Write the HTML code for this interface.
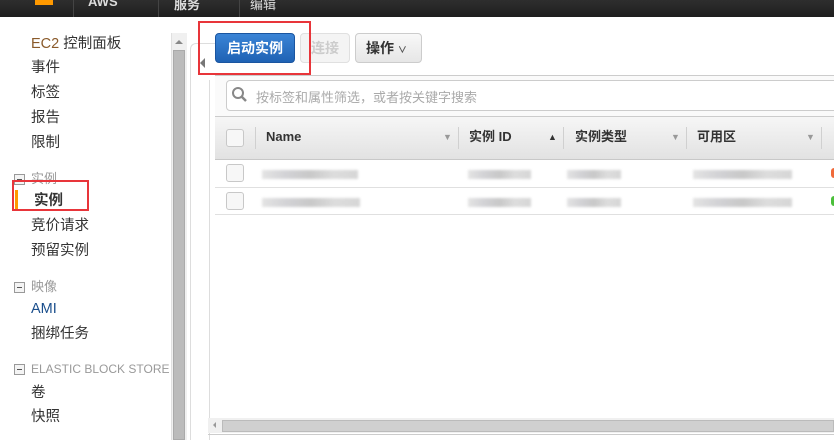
<!DOCTYPE html>
<html><head><meta charset="utf-8"><style>
*{margin:0;padding:0;box-sizing:border-box}
body{width:834px;height:440px;overflow:hidden;background:#fff;font-family:"Liberation Sans","Noto Sans CJK SC",sans-serif;position:relative}
.a{position:absolute}
.top{left:0;top:0;width:834px;height:17px;background:linear-gradient(#2e2e2e,#1e1e1e)}
.nav{font-size:14.5px;color:#333;left:31px;line-height:20px}
.sec{font-size:13px;color:#999;left:31px;line-height:18px}
.box{left:14px;width:11px;height:11px;border:1px solid #999;background:#f4f4f4}
.box:after{content:"";position:absolute;left:2px;top:4px;width:5px;height:1px;background:#555}
.hd{font-size:13px;font-weight:bold;color:#333;top:128px;line-height:18px;height:18px}
.sep{width:1px;height:22px;background:#d0d0d0;top:127px}
.arr{font-size:9px;color:#999;top:132px}
.cb{width:18px;height:18px;border:1px solid #c8c8c8;border-radius:3px;background:#f7f7f7}
.bl{height:9px;background:linear-gradient(90deg,#ddd,#c8c8cc,#bbb,#d5d5d5,#ccc);filter:blur(1.2px);opacity:.8}
.tt{color:#ddd;font-size:13px;font-weight:bold;top:-6px}
</style></head><body>
<div class="a top"></div>
<div class="a" style="left:35px;top:0;width:18px;height:5px;background:#f90"></div>
<div class="a" style="left:73px;top:0;width:1px;height:17px;background:#444"></div>
<div class="a tt" style="left:88px">AWS</div>
<div class="a" style="left:158px;top:0;width:1px;height:17px;background:#444"></div>
<div class="a tt" style="left:174px">服务</div>
<div class="a" style="left:239px;top:0;width:1px;height:17px;background:#444"></div>
<div class="a tt" style="left:250px;font-weight:normal">编辑</div>

<div class="a nav" style="top:34px"><span style="color:#8a5a2a">EC2</span> 控制面板</div>
<div class="a nav" style="top:58px">事件</div>
<div class="a nav" style="top:83px">标签</div>
<div class="a nav" style="top:108px">报告</div>
<div class="a nav" style="top:133px">限制</div>
<div class="a box" style="top:174px"></div>
<div class="a sec" style="top:170px">实例</div>
<div class="a" style="left:15px;top:190px;width:3px;height:20px;background:#f90"></div>
<div class="a nav" style="top:191px;left:34px;font-weight:bold;color:#333">实例</div>
<div class="a" style="left:12px;top:180px;width:77px;height:31px;border:2px solid #e8353a"></div>
<div class="a nav" style="top:216px">竞价请求</div>
<div class="a nav" style="top:241px">预留实例</div>
<div class="a box" style="top:282px"></div>
<div class="a sec" style="top:278px">映像</div>
<div class="a nav" style="top:299px;color:#1a4e8c">AMI</div>
<div class="a nav" style="top:324px">捆绑任务</div>
<div class="a box" style="top:364px"></div>
<div class="a sec" style="top:360px;font-size:12px">ELASTIC BLOCK STORE</div>
<div class="a nav" style="top:383px">卷</div>
<div class="a nav" style="top:407px">快照</div>

<div class="a" style="left:171px;top:33px;width:16px;height:407px;background:#f0f0f0;border-left:1px solid #e0e0e0"></div>
<div class="a" style="left:175px;top:40px;width:0;height:0;border:4px solid transparent;border-bottom-color:#888;border-top:none"></div>
<div class="a" style="left:173px;top:50px;width:12px;height:390px;background:#bbb;border:1px solid #aaa"></div>

<div class="a" style="left:190px;top:43px;width:30px;height:397px;border-left:1px solid #ddd;border-top:1px solid #ddd;border-radius:6px 0 0 0"></div>
<div class="a" style="left:200px;top:58px;width:0;height:0;border:5px solid transparent;border-right-color:#777;border-left:none"></div>
<div class="a" style="left:209px;top:80px;width:1px;height:360px;background:#ddd"></div>

<div class="a" style="left:215px;top:33px;width:80px;height:30px;border-radius:4px;background:linear-gradient(#3b84d6,#1f62b4);border:1px solid #1a55a0;color:#fff;font-weight:bold;font-size:14px;text-align:center;line-height:28px">启动实例</div>
<div class="a" style="left:300px;top:33px;width:50px;height:30px;border-radius:4px;background:#f4f4f4;border:1px solid #e0e0e0;color:#ccc;font-weight:bold;font-size:14px;text-align:center;line-height:28px">连接</div>
<div class="a" style="left:355px;top:33px;width:67px;height:30px;border-radius:4px;background:linear-gradient(#f8f8f8,#e6e6e6);border:1px solid #ccc;color:#333;font-weight:bold;font-size:14px;line-height:28px;padding-left:10px">操作 <span style="font-size:9px;color:#555">&#x2228;</span></div>
<div class="a" style="left:198px;top:21px;width:113px;height:54px;border:2px solid #e8353a"></div>

<div class="a" style="left:215px;top:75px;width:619px;height:1px;background:#ccc"></div>
<div class="a" style="left:215px;top:76px;width:619px;height:40px;background:#fafafa"></div>
<div class="a" style="left:226px;top:80px;width:620px;height:31px;border:1px solid #ccc;border-radius:4px;background:#fff"></div>
<svg class="a" style="left:231px;top:86px" width="18" height="18"><circle cx="7" cy="7" r="5" fill="none" stroke="#888" stroke-width="2"/><line x1="10.5" y1="10.5" x2="15" y2="15" stroke="#888" stroke-width="2.5"/></svg>
<div class="a" style="left:256px;top:87px;font-size:13px;color:#aaa">按标签和属性筛选，或者按关键字搜索</div>

<div class="a" style="left:215px;top:116px;width:619px;height:44px;background:linear-gradient(#f6f6f6,#e2e2e2);border-top:1px solid #ccc;border-bottom:1px solid #c8c8c8"></div>
<div class="a cb" style="left:226px;top:129px"></div>
<div class="a sep" style="left:255px"></div>
<div class="a hd" style="left:266px">Name</div>
<div class="a arr" style="left:443px">▼</div>
<div class="a sep" style="left:458px"></div>
<div class="a hd" style="left:469px">实例 ID</div>
<div class="a arr" style="left:548px;color:#333">▲</div>
<div class="a sep" style="left:563px"></div>
<div class="a hd" style="left:575px">实例类型</div>
<div class="a arr" style="left:671px">▼</div>
<div class="a sep" style="left:686px"></div>
<div class="a hd" style="left:697px">可用区</div>
<div class="a arr" style="left:806px">▼</div>
<div class="a sep" style="left:821px"></div>

<div class="a" style="left:215px;top:187px;width:619px;height:1px;background:#e0e0e0"></div>
<div class="a" style="left:215px;top:214px;width:619px;height:1px;background:#e0e0e0"></div>
<div class="a cb" style="left:226px;top:164px"></div>
<div class="a cb" style="left:226px;top:192px"></div>
<div class="a bl" style="left:262px;top:170px;width:96px"></div>
<div class="a bl" style="left:468px;top:170px;width:63px"></div>
<div class="a bl" style="left:567px;top:170px;width:54px"></div>
<div class="a bl" style="left:693px;top:170px;width:99px"></div>
<div class="a bl" style="left:262px;top:198px;width:98px"></div>
<div class="a bl" style="left:468px;top:198px;width:63px"></div>
<div class="a bl" style="left:567px;top:198px;width:54px"></div>
<div class="a bl" style="left:693px;top:198px;width:99px"></div>
<div class="a" style="left:831px;top:168px;width:6px;height:10px;border-radius:3px;background:#f06a3a"></div>
<div class="a" style="left:831px;top:196px;width:6px;height:10px;border-radius:3px;background:#4bbf3a"></div>

<div class="a" style="left:208px;top:418px;width:626px;height:15px;background:#f0f0f0"></div>
<div class="a" style="left:213px;top:422px;width:0;height:0;border:3px solid transparent;border-right-color:#999;border-left:none"></div>
<div class="a" style="left:222px;top:420px;width:612px;height:12px;background:#d0d0d0;border:1px solid #bbb"></div>
<div class="a" style="left:208px;top:434px;width:626px;height:1px;background:#ccc"></div>
</body></html>
